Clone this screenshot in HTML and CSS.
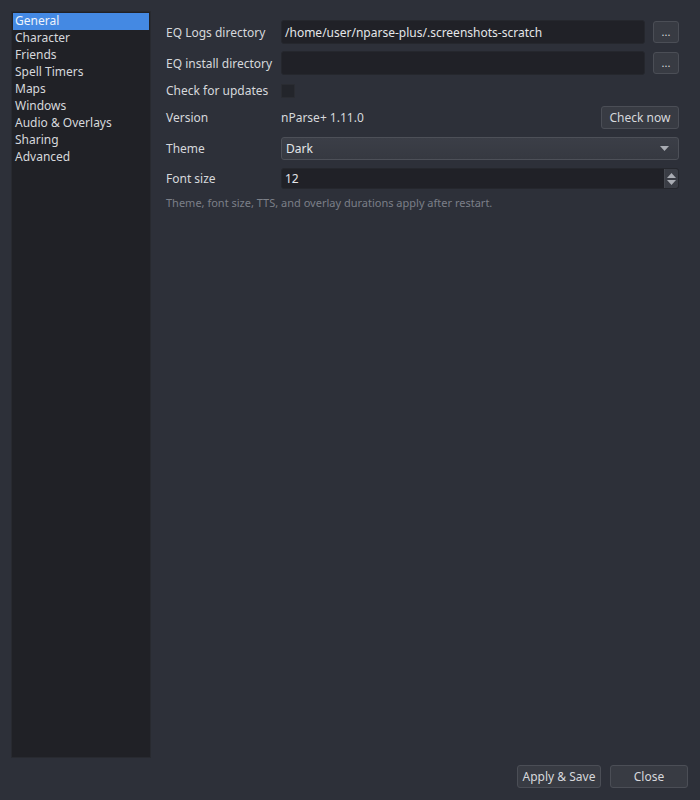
FILE: index.html
```html
<!DOCTYPE html>
<html>

<head>
  <title>Settings</title>
  <link rel="stylesheet" href="styles.css">
</head>

<body>
  <div class="window">
    <div class="main">
      <ul class="nav">
        <li class="active">General</li>
        <li>Character</li>
        <li>Friends</li>
        <li>Spell Timers</li>
        <li>Maps</li>
        <li>Windows</li>
        <li>Audio &amp; Overlays</li>
        <li>Sharing</li>
        <li>Advanced</li>
      </ul>

      <div class="panel">
        <div class="row row-path">
          <label>EQ Logs directory</label>
          <div class="field-line">
            <div class="input">/home/user/nparse-plus/.screenshots-scratch</div>
            <button class="browse">...</button>
          </div>
        </div>
        <div class="row row-path">
          <label>EQ install directory</label>
          <div class="field-line">
            <div class="input"></div>
            <button class="browse">...</button>
          </div>
        </div>
        <div class="row row-check">
          <label>Check for updates</label>
          <div class="field-line">
            <span class="checkbox"></span>
          </div>
        </div>
        <div class="row row-version">
          <label>Version</label>
          <div class="field-line">
            <span class="value">nParse+ 1.11.0</span>
            <button class="check-now">Check now</button>
          </div>
        </div>
        <div class="row row-theme">
          <label>Theme</label>
          <div class="combo">
            <span>Dark</span>
            <svg class="combo-arrow" width="9" height="5" viewBox="0 0 9 5">
              <path d="M0 0 L9 0 L4.5 5 Z" fill="#a9acb3" />
            </svg>
          </div>
        </div>
        <div class="row row-font">
          <label>Font size</label>
          <div class="spin">
            <span>12</span>
            <div class="spin-buttons">
              <svg width="9" height="5" viewBox="0 0 9 5">
                <path d="M0 5 L9 5 L4.5 0 Z" fill="#a9acb3" />
              </svg>
              <svg width="9" height="5" viewBox="0 0 9 5">
                <path d="M0 0 L9 0 L4.5 5 Z" fill="#a9acb3" />
              </svg>
            </div>
          </div>
        </div>
        <p class="hint">Theme, font size, TTS, and overlay durations apply after restart.</p>
      </div>
    </div>

    <div class="footer">
      <button class="btn btn-apply">Apply &amp; Save</button>
      <button class="btn btn-close">Close</button>
    </div>
  </div>
</body>

</html>
```

FILE: styles.css
```css
html,
body {
  margin: 0;
  height: 100%;
}

body {
  background-color: #2d3039;
  color: #d6d8dc;
  font-family: "Noto Sans", "DejaVu Sans", sans-serif;
  font-size: 12px;
}

.window {
  height: 800px;
  box-sizing: border-box;
  padding: 11px 12px 12px 11px;
  display: flex;
  flex-direction: column;
}

.main {
  flex: 1;
  display: flex;
  min-height: 0;
}

.nav {
  list-style: none;
  margin: 0;
  padding: 1px;
  width: 136px;
  background-color: #202126;
  border: 1px solid #282a30;
  flex-shrink: 0;
}

.nav li {
  height: 17px;
  line-height: 16px;
  padding-left: 2px;
  color: #d6d8dc;
}

.nav li.active {
  background-color: #4489e3;
  color: #eef3fb;
}

.panel {
  flex: 1;
  padding: 9px 9px 0 15px;
  display: flex;
  flex-direction: column;
  gap: 7px;
}

.row {
  display: flex;
  align-items: center;
}

.row label {
  width: 115px;
  flex-shrink: 0;
  white-space: nowrap;
}

.field-line {
  flex: 1;
  display: flex;
  align-items: center;
  gap: 8px;
}

.row-path {
  height: 24px;
}

.row-check {
  height: 17px;
}

.row-version {
  height: 23px;
}

.row-theme {
  height: 23px;
  margin-top: 1px;
}

.row-font {
  height: 21px;
  margin-top: 1px;
}

.input {
  flex: 1;
  height: 24px;
  line-height: 23px;
  box-sizing: border-box;
  padding: 0 3px;
  background-color: #202127;
  border: 1px solid #25272d;
  border-radius: 3px;
  color: #e4e6e9;
}

button {
  font-family: inherit;
  font-size: inherit;
  color: #d6d8dc;
  background-color: #383b43;
  border: 1px solid #4b4e56;
  border-radius: 3px;
  cursor: pointer;
  padding: 0;
}

.browse {
  width: 26px;
  height: 22px;
  font-size: 11px;
  line-height: 14px;
}

.checkbox {
  display: inline-block;
  width: 12px;
  height: 12px;
  background-color: #23252b;
  border: 1px solid #2a2c32;
  border-radius: 1px;
}

.value {
  flex: 1;
}

.check-now {
  width: 78px;
  height: 23px;
}

.combo {
  flex: 1;
  height: 23px;
  box-sizing: border-box;
  padding: 0 9px 0 4px;
  display: flex;
  align-items: center;
  justify-content: space-between;
  background: linear-gradient(#3b3e47, #363941);
  border: 1px solid #4d5058;
  border-radius: 3px;
  color: #e4e6e9;
}

.spin {
  flex: 1;
  height: 21px;
  box-sizing: border-box;
  padding-left: 3px;
  display: flex;
  align-items: center;
  justify-content: space-between;
  background-color: #202127;
  border: 1px solid #25272d;
  border-radius: 3px;
  color: #e4e6e9;
}

.spin-buttons {
  width: 13px;
  height: 19px;
  display: flex;
  flex-direction: column;
  align-items: center;
  justify-content: center;
  gap: 2px;
  background-color: #3a3d45;
  border-left: 1px solid #45484f;
  border-radius: 0 2px 2px 0;
}

.spin-buttons svg {
  display: block;
}

.hint {
  margin: -1px 0 0;
  font-size: 11px;
  color: #7b7f88;
}

.footer {
  display: flex;
  justify-content: flex-end;
  gap: 9px;
  margin-top: 7px;
  height: 23px;
}

.btn {
  height: 23px;
  padding: 0;
}

.btn-apply {
  width: 84px;
}

.btn-close {
  width: 78px;
}
```
